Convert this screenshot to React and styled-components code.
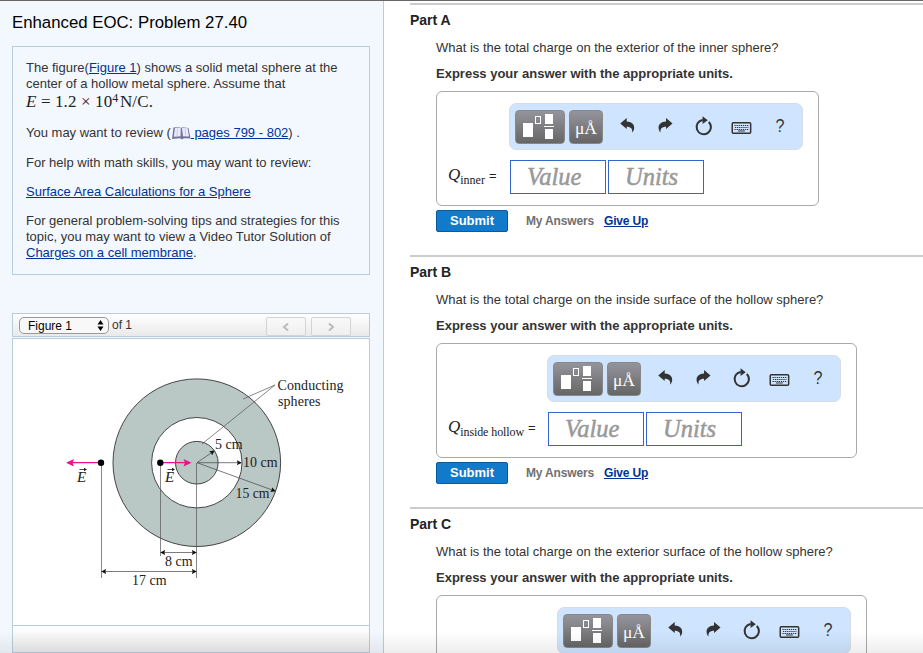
import React from "react";
import styled, { createGlobalStyle } from "styled-components";

const GlobalStyle = createGlobalStyle`
  * {
    box-sizing: border-box;
  }
  body {
    margin: 0;
    overflow: hidden;
    background: #fff;
    color: #333;
    font-family: "Liberation Sans", Arial, sans-serif;
    font-size: 13px;
    line-height: 16px;
  }
`;
const Page = styled.div`
  position: relative;
  display: flex;
  height: 653px;
  border-top: 1px solid #666;
  overflow: hidden;
`;
const BottomShade = styled.div`
  position: absolute;
  left: 0;
  right: 0;
  bottom: 0;
  height: 22px;
  background: linear-gradient(rgba(0, 0, 0, 0), rgba(0, 0, 0, 0.07));
  pointer-events: none;
`;
const Sidebar = styled.aside`
  flex: none;
  width: 384px;
  padding: 13px 13px 0 12px;
  background: #f3f8ff;
  border-right: 1px solid #b9ccde;
`;
const Title = styled.h1`
  margin: 0 0 14px;
  font-size: 16.800px;
  font-weight: 400;
  line-height: 18px;
  color: #000;
`;
const Intro = styled.div`
  height: 229px;
  width: 358px;
  padding: 13px 13px 0;
  border: 1px solid #b9ccde;
  white-space: nowrap;
  p {
    margin: 0 0 13px;
  }
  p:first-child {
    margin-bottom: 14px;
  }
  p:nth-child(2) {
    height: 16px;
    margin-bottom: 14px;
  }
`;
const Link = styled.a`
  color: #039;
  text-decoration: underline;
`;
const Formula = styled.span`
  display: block;
  height: 19px;
  font-family: "Liberation Serif", serif;
  font-size: 17px;
  line-height: 20px;
  letter-spacing: 0.12px;
  color: #222;
  sup {
    font-size: 12px;
    line-height: 0;
    vertical-align: 5px;
  }
`;
const BookSvg = styled.svg`
  vertical-align: -4px;
`;
const FigureBar = styled.div`
  display: flex;
  align-items: flex-start;
  width: 358px;
  height: 24px;
  margin-top: 38px;
  padding: 3px 18px 0 6px;
  border: 1px solid #b9ccde;
  background: linear-gradient(#fff, #e9e9e9);
`;
const FigureSelect = styled.div`
  display: flex;
  align-items: center;
  justify-content: space-between;
  width: 90px;
  height: 17px;
  padding: 0 4px 0 8px;
  margin-right: 3px;
  border: 1px solid #999;
  border-radius: 5px;
  background: #f8f8f8;
  color: #000;
  font-size: 12px;
`;
const Count = styled.span`
  flex: 1;
  font-size: 12px;
`;
const PagerButton = styled.button`
  display: flex;
  align-items: center;
  justify-content: center;
  width: 40px;
  height: 19px;
  margin-left: 5px;
  padding: 0;
  border: 1px solid #d4d4d4;
  border-radius: 2px;
  background: linear-gradient(#f9f9f9, #efefef);
`;
const FigurePanel = styled.div`
  width: 358px;
  height: 288px;
  margin-top: 1px;
  border: 1px solid #b9ccde;
  background: #fff;
  svg {
    display: block;
  }
`;
const FigureFooter = styled.div`
  width: 358px;
  height: 27px;
  border: 1px solid #b9ccde;
  border-top: 0;
  background: linear-gradient(#fff, #ececec);
`;
const Main = styled.main`
  flex: 1;
  padding: 2px 0 0 26px;
`;
const PartSection = styled.section`
  height: 252px;
  border-top: 2px solid #ccc;
  padding-top: 7px;
  h2 {
    margin: 0;
    font-size: 14px;
    line-height: 16px;
    color: #222;
  }
`;
const PartBody = styled.div`
  padding: 12px 0 0 26px;
  p {
    margin: 0 0 10px;
    white-space: nowrap;
  }
  p:nth-child(2) {
    margin-bottom: 9px;
  }
`;
const AnswerBox = styled.div`
  width: ${(p) => p.$labelWidth + 322}px;
  height: 115px;
  padding: 11px 15px 0 11px;
  border: 1px solid #aaa;
  border-radius: 6px;
`;
const Toolbar = styled.div`
  display: flex;
  align-items: center;
  width: 294px;
  height: 47px;
  margin-left: ${(p) => p.$labelWidth}px;
  padding-left: 5px;
  border: 1px solid #d9dde3;
  border-radius: 7px;
  background: #cfe5ff;
`;
const MathButton = styled.button`
  width: ${(p) => p.$width}px;
  height: 34px;
  margin-right: 4px;
  padding: 0;
  border: 1px solid #888;
  border-radius: 4px;
  background: linear-gradient(#94949c, #666);
  color: #fff;
  font-family: "Liberation Serif", serif;
  font-size: 17.500px;
  svg {
    display: block;
  }
`;
const Micro = styled.span`
  display: block;
  padding-top: 3px;
`;
const ToolIcons = styled.svg`
  display: block;
`;
const AnswerRow = styled.div`
  display: flex;
  margin-top: 10px;
`;
const Label = styled.label`
  width: ${(p) => p.$labelWidth + 1}px;
  padding-top: 7px;
  font-family: "Liberation Serif", serif;
  color: #222;
  white-space: nowrap;
  i {
    font-size: 17px;
  }
  sub {
    margin-right: 4px;
    font-size: 12px;
    line-height: 0;
    vertical-align: -4px;
    letter-spacing: ${(p) => p.$tracking}px;
  }
  b {
    font-family: "Liberation Sans", sans-serif;
    font-weight: 400;
  }
`;
const Field = styled.input`
  width: 96px;
  height: 34px;
  margin: 0 2px 0 0;
  padding: 0 0 0 16px;
  border: 1px solid #36c;
  border-radius: 0;
  background: #fff;
  font: italic 24.500px "Liberation Serif", serif;
  outline: none;
  &::placeholder {
    color: #999;
    opacity: 1;
    -webkit-text-stroke: 0.5px #999;
  }
`;
const Actions = styled.div`
  display: flex;
  align-items: center;
  margin-top: 4px;
  font-size: 12px;
  font-weight: 700;
  letter-spacing: -0.16px;
`;
const Submit = styled.button`
  width: 72px;
  height: 22px;
  margin-right: 18px;
  padding: 0 0 2px;
  border: 1px solid #0a5a9c;
  border-radius: 2px;
  background: #117acb;
  color: #fff;
  font: bold 13px "Liberation Sans", sans-serif;
`;
const MyAnswers = styled.span`
  margin-right: 10px;
  color: #707070;
`;

const parts = [
  {
    name: "Part A",
    question: "What is the total charge on the exterior of the inner sphere?",
    sub: "inner",
    labelWidth: 61,
    tracking: 0,
  },
  {
    name: "Part B",
    question:
      "What is the total charge on the inside surface of the hollow sphere?",
    sub: "inside hollow",
    labelWidth: 99,
    tracking: -0.1,
  },
  {
    name: "Part C",
    question:
      "What is the total charge on the exterior surface of the hollow sphere?",
    labelWidth: 109,
  },
];

const Book = () => (
  <BookSvg width="20" height="16" viewBox="0 0 20 16">
    <path d="M2.500 2.500 1 14l8-.8 2 1.300 2-1.300 6.500.3L17.500 3l-6-.8-1.500.8-2-1z" fill="#77739c" />
    <path d="M4 3 2.800 11.800l6.700-.6L9.800 3.300 8 2.500zM11 3.300l1-.6 4.700.6 1.300 8.200-6-.3z" fill="#e9ebfa" />
    <path d="M6.500 3.500 6 11M14 3.500l.8 7" stroke="#c9c8e4" />
  </BookSvg>
);

const Chevron = ({ d }) => (
  <svg width="10" height="10" viewBox="0 0 10 10">
    <path d={d} fill="none" stroke="#bbb" strokeWidth="2" />
  </svg>
);

// undo, redo, reset, keyboard and help
const EditIcons = () => (
  <ToolIcons width="196" height="45" viewBox="0 0 196 45" fill="#333">
    <path d="M13.300 19.500 19.800 14v3.500c5 .2 7.800 3 7.500 6.500-.1 2-.9 3.500-2 4.500.4-3.500-1-5.700-5.500-5.700V25z" />
    <path d="M65.800 19.500 59.300 14v3.500c-5 .2-7.800 3-7.500 6.500.1 2 .9 3.500 2 4.500-.4-3.500 1-5.700 5.500-5.700V25z" />
    <path
      d="M102.200 17.900a7.200 7.200 0 1 1-6-2"
      fill="none"
      stroke="#333"
      strokeWidth="2"
    />
    <path d="M96 12.300 101.200 16.200 96 20z" />
    <rect x="125.800" y="18.800" width="18.500" height="10.500" rx="1" fill="none" stroke="#333" strokeWidth="1.500" />
    <path
      d="M128 21.500h14.500M128.500 23.500h13.500M128 25.500h14.500"
      stroke="#333"
      strokeDasharray="1.300 .8"
      strokeWidth="1.200"
    />
    <path d="M131.500 27h7" stroke="#333" />
    <text x="169.300" y="28" fontFamily="Liberation Sans" fontSize="18" textLength="9" lengthAdjust="spacingAndGlyphs">
      ?
    </text>
  </ToolIcons>
);

const SpheresFigure = () => (
  <svg
    width="356"
    height="286"
    viewBox="13 339 356 286"
    fontFamily="Liberation Serif"
    fontSize="14"
    fill="#222"
  >
    <defs>
      <marker id="tip" viewBox="0 0 6 6" refX="5" refY="3" markerWidth="5" markerHeight="5" markerUnits="userSpaceOnUse" orient="auto-start-reverse">
        <path d="M0 0 6 3 0 6 1 3z" fill="#111" />
      </marker>
    </defs>
    <g stroke="#333" strokeWidth=".9">
      <circle cx="196.800" cy="462.700" r="83.800" fill="#b9c7c5" />
      <circle cx="196.800" cy="462.700" r="45.200" fill="#fff" />
      <circle cx="196.800" cy="462.700" r="21.300" fill="#b9c7c5" />
    </g>
    <path
      d="M101.500 464v114M160.500 464v92M196.500 463v115M275 385l-32 14M275 385l-73 59"
      fill="none"
      stroke="#555"
      strokeWidth=".7"
    />
    <g stroke="#444" strokeWidth=".7">
      <path d="M197 462.700 214 451" markerEnd="url(#tip)" />
      <path d="M197 462.700H241" markerEnd="url(#tip)" />
      <path d="M197 462.700 275 491" markerEnd="url(#tip)" />
      <path d="M161 552.500H196" markerStart="url(#tip)" markerEnd="url(#tip)" />
      <path d="M102 571.500H196" markerStart="url(#tip)" markerEnd="url(#tip)" />
    </g>
    <path d="M101 462.700H72M160 462.700H186" stroke="#e6148c" strokeWidth="1.300" />
    <path d="M66 462.700 74 459l-1.500 3.700 1.500 3.700zM191.500 462.700 183.500 459l1.500 3.700-1.500 3.700z" fill="#e6148c" />
    <circle cx="101" cy="462.700" r="3.200" fill="#000" />
    <circle cx="160.300" cy="462.700" r="3.200" fill="#000" />
    <g fontStyle="italic" fontSize="15">
      <text x="77" y="481.500">E</text>
      <text x="165" y="481.500">E</text>
    </g>
    <path d="M79.500 469.500h6M167.500 469.500h6" stroke="#222" strokeWidth=".8" />
    <path d="m84 467.800 3 1.700-3 1.700zM172 467.800l3 1.700-3 1.700z" />
    <text x="277.500" y="389.500" textLength="66">Conducting</text>
    <text x="278" y="405.500" textLength="42.500">spheres</text>
    <text x="215" y="448.500" textLength="27.500" lengthAdjust="spacingAndGlyphs">5 cm</text>
    <text x="243" y="467" textLength="34.500" lengthAdjust="spacingAndGlyphs">10 cm</text>
    <text x="235.500" y="497.500" textLength="34" lengthAdjust="spacingAndGlyphs">15 cm</text>
    <text x="165" y="566" textLength="27.500" lengthAdjust="spacingAndGlyphs">8 cm</text>
    <text x="132" y="585" textLength="34.500" lengthAdjust="spacingAndGlyphs">17 cm</text>
  </svg>
);

const Part = ({ name, question, sub, labelWidth, tracking }) => (
  <PartSection>
    <h2>{name}</h2>
    <PartBody>
      <p>{question}</p>
      <p>
        <strong>Express your answer with the appropriate units.</strong>
      </p>
      <AnswerBox $labelWidth={labelWidth}>
        <Toolbar $labelWidth={labelWidth}>
          <MathButton $width={50}>
            <svg width="48" height="32" viewBox="0 0 48 32" fill="#fff">
              <path d="M7 12h10v14H7zM29 3h8v10h-8zM28 15h10v1H28zM29 18h8v10h-8z" />
              <rect x="19.500" y="5.500" width="5" height="7" fill="none" stroke="#fff" />
            </svg>
          </MathButton>
          <MathButton $width={34}>
            <Micro>μÅ</Micro>
          </MathButton>
          <EditIcons />
        </Toolbar>
        {sub && (
          <AnswerRow>
            <Label $labelWidth={labelWidth} $tracking={tracking}>
              <i>Q</i>
              <sub>{sub}</sub>
              <b>=</b>
            </Label>
            <Field placeholder="Value" />
            <Field placeholder="Units" />
          </AnswerRow>
        )}
      </AnswerBox>
      {sub && (
        <Actions>
          <Submit>Submit</Submit>
          <MyAnswers>My Answers</MyAnswers>
          <Link href="#">Give Up</Link>
        </Actions>
      )}
    </PartBody>
  </PartSection>
);

const App = () => (
  <>
    <GlobalStyle />
    <Page>
      <Sidebar>
        <Title>Enhanced EOC: Problem 27.40</Title>
        <Intro>
          <p>
            The figure(<Link href="#">Figure 1</Link>) shows a solid metal
            sphere at the
            <br />
            center of a hollow metal sphere. Assume that
            <Formula>
              <i>E</i> = 1.2 × 10<sup>4</sup>&#8202;N/C.
            </Formula>
          </p>
          <p>
            You may want to review (
            <Link href="#">
              <Book /> pages 799 - 802
            </Link>
            ) .
          </p>
          <p>For help with math skills, you may want to review:</p>
          <p>
            <Link href="#">Surface Area Calculations for a Sphere</Link>
          </p>
          <p>
            For general problem-solving tips and strategies for this
            <br />
            topic, you may want to view a Video Tutor Solution of
            <br />
            <Link href="#">Charges on a cell membrane</Link>.
          </p>
        </Intro>
        <FigureBar>
          <FigureSelect>
            Figure 1
            <svg width="7" height="11" viewBox="0 0 7 11">
              <path d="M3.500 0 6.500 4.500h-6zM3.500 11 .5 6.500h6z" fill="#000" />
            </svg>
          </FigureSelect>
          <Count>of 1</Count>
          <PagerButton>
            <Chevron d="M7 1.500 3 5l4 3.500" />
          </PagerButton>
          <PagerButton>
            <Chevron d="M3 1.500 7 5 3 8.500" />
          </PagerButton>
        </FigureBar>
        <FigurePanel>
          <SpheresFigure />
        </FigurePanel>
        <FigureFooter />
      </Sidebar>
      <Main>
        {parts.map((part) => (
          <Part key={part.name} {...part} />
        ))}
      </Main>
      <BottomShade />
    </Page>
  </>
);

export default App;
